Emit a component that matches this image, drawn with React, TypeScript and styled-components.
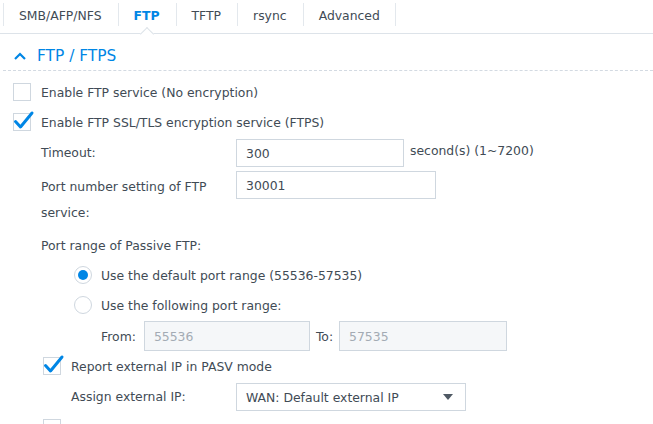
import React from "react";
import styled, { createGlobalStyle } from "styled-components";

const Global = createGlobalStyle`
  html, body { margin: 0; padding: 0; background: #fff; }
  body { font-family: "DejaVu Sans", Verdana, sans-serif; font-size: 12.4px; color: #414b55; height: 424px; overflow: hidden; }
  * { box-sizing: border-box; }
`;

const BLUE = "#0086e5";
const BORDER = "#cfd7df";

const Page = styled.div`
  width: 653px;
  display: flex;
  flex-direction: column;
  & > * { flex: none; }
`;

const TabBar = styled.div`
  display: flex;
  height: 34px;
  padding-left: 3px;
  border-bottom: 1px solid #dde3e9;
`;

const Tab = styled.div<{ $active?: boolean; $last?: boolean }>`
  position: relative;
  height: 33px;
  padding: 0 16px;
  display: flex;
  align-items: center;
  padding-bottom: 3px;
  font-weight: ${(p) => (p.$active ? 700 : 400)};
  color: ${(p) => (p.$active ? BLUE : "#414b55")};
  &::before {
    content: "";
    position: absolute;
    left: 0;
    top: 3px;
    height: 23px;
    border-left: 1px solid #e3e8ed;
  }
  ${(p) =>
    p.$last
      ? `&::after { content: ""; position: absolute; right: 0; top: 3px; height: 23px; border-left: 1px solid #e3e8ed; }`
      : ""}
`;

const Pointer = styled.span`
  position: absolute;
  left: 50%;
  bottom: -6px;
  width: 10px;
  height: 10px;
  margin-left: -5px;
  background: #fff;
  border-top: 1px solid #dde3e9;
  border-left: 1px solid #dde3e9;
  transform: rotate(45deg);
`;

const SectionHeader = styled.div`
  height: 37px;
  margin: 0 0 0 3px;
  padding: 8px 0 0 11px;
  display: flex;
  align-items: center;
  gap: 11px;
  color: ${BLUE};
  font-size: 15.4px;
  border-bottom: 1px dashed #d3dae2;
`;

const Content = styled.div`
  padding: 6px 0 0 13px;
  display: flex;
  flex-direction: column;
  & > * { flex: none; }
`;

const CheckRow = styled.label<{ $indent?: number }>`
  height: 30px;
  display: flex;
  align-items: center;
  gap: 10px;
  margin-left: ${(p) => p.$indent ?? 0}px;
`;

const Box = styled.span`
  position: relative;
  width: 18px;
  height: 18px;
  border: 1px solid ${BORDER};
  background: #fff;
  flex: none;
`;

const CheckSvg = styled.svg`
  position: absolute;
  left: 0px;
  top: -3px;
  overflow: visible;
`;

const Sub = styled.div`
  padding-left: 28px;
  display: flex;
  flex-direction: column;
  & > * { flex: none; }
`;

const FieldRow = styled.div<{ $top?: number }>`
  display: flex;
  align-items: flex-start;
  margin-top: ${(p) => p.$top ?? 0}px;
`;

const Label = styled.div<{ $w: number; $pad?: number }>`
  width: ${(p) => p.$w}px;
  padding-left: ${(p) => p.$pad ?? 0}px;
  flex: none;
  line-height: 26px;
  padding-top: 1px;
`;

const WrapLabel = styled.div`
  width: 175px;
  margin-right: 20px;
  flex: none;
  line-height: 26px;
  padding-top: 3px;
`;

const Input = styled.div<{ $w: number; $h?: number; $disabled?: boolean }>`
  width: ${(p) => p.$w}px;
  height: ${(p) => p.$h ?? 28}px;
  border: 1px solid ${BORDER};
  background: ${(p) => (p.$disabled ? "#f5f7f9" : "#fff")};
  color: ${(p) => (p.$disabled ? "#a3abb4" : "#414b55")};
  padding-left: 9px;
  display: flex;
  align-items: center;
  flex: none;
`;

const Unit = styled.span`
  margin-left: 6px;
  line-height: 24px;
`;

const PlainRow = styled.div`
  height: 30px;
  display: flex;
  align-items: center;
  margin-top: 4px;
`;

const RadioRow = styled.label`
  height: 30px;
  display: flex;
  align-items: center;
  gap: 9px;
  margin-left: 33px;
`;

const Radio = styled.span<{ $on?: boolean }>`
  width: 18px;
  height: 18px;
  border-radius: 50%;
  border: 1px solid ${BORDER};
  background: #fff;
  display: flex;
  align-items: center;
  justify-content: center;
  flex: none;
  &::after {
    content: "";
    display: ${(p) => (p.$on ? "block" : "none")};
    width: 10px;
    height: 10px;
    border-radius: 50%;
    background: ${BLUE};
  }
`;

const RangeRow = styled.div`
  display: flex;
  align-items: center;
  margin: 1px 0 0 60px;
  height: 30px;
`;

const RangeLabel = styled.span<{ $gap: number; $lead?: number }>`
  margin-right: ${(p) => p.$gap}px;
  margin-left: ${(p) => p.$lead ?? 0}px;
`;

const Select = styled(Input)`
  justify-content: space-between;
  padding-right: 12px;
`;

const Arrow = styled.span`
  width: 0;
  height: 0;
  border-left: 5px solid transparent;
  border-right: 5px solid transparent;
  border-top: 6px solid #4f5964;
`;

const Check = ({ on }: { on?: boolean }) => (
  <Box>
    {on && (
      <CheckSvg width="20" height="20" viewBox="0 0 20 20">
        <path d="M1.5 10.5 L6.5 16 L18 2" fill="none" stroke={BLUE} strokeWidth="3" strokeLinecap="round" strokeLinejoin="round" />
      </CheckSvg>
    )}
  </Box>
);

export default function App() {
  return (
    <Page>
      <Global />
      <TabBar>
        <Tab>SMB/AFP/NFS</Tab>
        <Tab $active>
          FTP
          <Pointer />
        </Tab>
        <Tab>TFTP</Tab>
        <Tab>rsync</Tab>
        <Tab $last>Advanced</Tab>
      </TabBar>
      <SectionHeader>
        <svg width="12" height="8" viewBox="0 0 12 8">
          <path d="M1 7 L6 2 L11 7" fill="none" stroke={BLUE} strokeWidth="2.2" />
        </svg>
        <span>FTP / FTPS</span>
      </SectionHeader>
      <Content>
        <CheckRow>
          <Check />
          <span>Enable FTP service (No encryption)</span>
        </CheckRow>
        <CheckRow>
          <Check on />
          <span>Enable FTP SSL/TLS encryption service (FTPS)</span>
        </CheckRow>
        <Sub>
          <FieldRow $top={2}>
            <Label $w={195}>Timeout:</Label>
            <Input $w={168}>300</Input>
            <Unit>second(s) (1~7200)</Unit>
          </FieldRow>
          <FieldRow $top={4}>
            <WrapLabel>Port number setting of FTP service:</WrapLabel>
            <Input $w={200}>30001</Input>
          </FieldRow>
          <PlainRow>Port range of Passive FTP:</PlainRow>
          <RadioRow>
            <Radio $on />
            <span>Use the default port range (55536-57535)</span>
          </RadioRow>
          <RadioRow>
            <Radio />
            <span>Use the following port range:</span>
          </RadioRow>
          <RangeRow>
            <RangeLabel $gap={8}>From:</RangeLabel>
            <Input $w={166} $h={30} $disabled>55536</Input>
            <RangeLabel $gap={6} $lead={6}>To:</RangeLabel>
            <Input $w={168} $h={30} $disabled>57535</Input>
          </RangeRow>
          <CheckRow $indent={2}>
            <Check on />
            <span>Report external IP in PASV mode</span>
          </CheckRow>
          <FieldRow $top={2}>
            <Label $w={195} $pad={30}>Assign external IP:</Label>
            <Select $w={230}>
              <span>WAN: Default external IP</span>
              <Arrow />
            </Select>
          </FieldRow>
          <CheckRow $indent={2} style={{ marginTop: 2 }}>
            <Check />
            <span></span>
          </CheckRow>
        </Sub>
      </Content>
    </Page>
  );
}
